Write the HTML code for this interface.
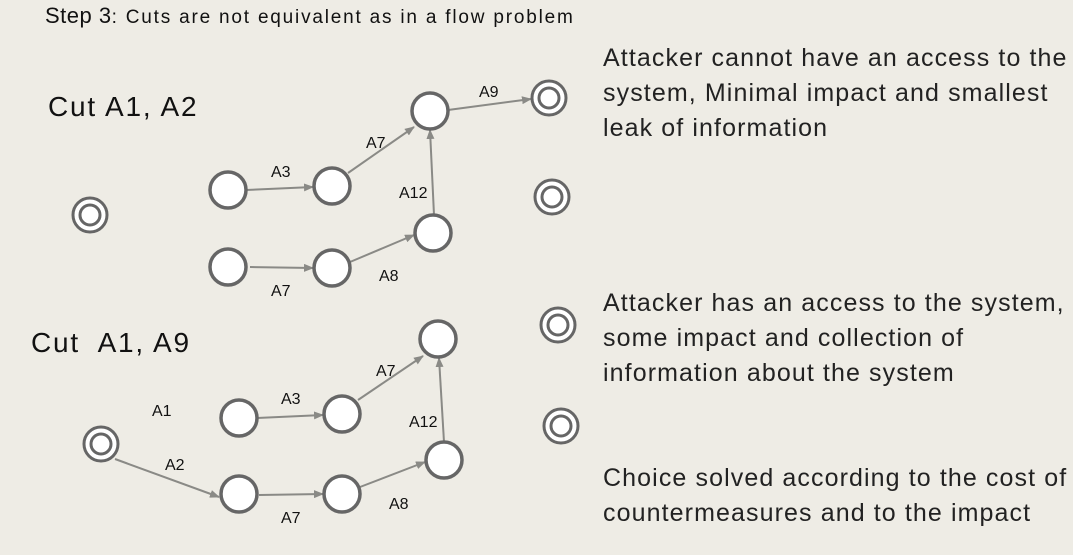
<!DOCTYPE html>
<html><head><meta charset="utf-8"><style>
html,body{margin:0;padding:0}
body{width:1073px;height:555px;background:#eeece5;position:relative;overflow:hidden;font-family:"Liberation Sans",sans-serif;color:#111}
.t{position:absolute;white-space:nowrap}
.r{position:absolute;left:603px;font-size:25px;letter-spacing:1.1px;line-height:35px;white-space:nowrap;color:#222}
</style></head><body>
<div class="t" style="left:45px;top:3px;font-size:22px;letter-spacing:0.5px"><span>Step 3</span><span style="font-size:19px;letter-spacing:1.8px">: Cuts are not equivalent as in a flow problem</span></div>
<div class="t" style="left:48px;top:91px;font-size:28px;letter-spacing:1.8px">Cut A1, A2</div>
<div class="t" style="left:31px;top:327px;font-size:28px;letter-spacing:1.8px">Cut&nbsp; A1, A9</div>
<div class="r" style="top:41px">Attacker cannot have an access to the<br>system, Minimal impact and smallest<br>leak of information</div>
<div class="r" style="top:286px">Attacker has an access to the system,<br>some impact and collection of<br>information about the system</div>
<div class="r" style="top:461px">Choice solved according to the cost of<br>countermeasures and to the impact</div>
<svg width="1073" height="555" style="position:absolute;left:0;top:0">
<defs><marker id="a" markerWidth="10" markerHeight="8" refX="9" refY="4" orient="auto" markerUnits="userSpaceOnUse"><path d="M0,0L10,4L0,8z" fill="#8a8a86"/></marker></defs>
<g stroke="#8a8a86" stroke-width="2" marker-end="url(#a)">
<line x1="246" y1="190" x2="313" y2="187"/>
<line x1="348" y1="173" x2="414" y2="127"/>
<line x1="448" y1="110" x2="531" y2="99"/>
<line x1="434" y1="215" x2="430" y2="130"/>
<line x1="250" y1="267" x2="313" y2="268"/>
<line x1="350" y1="262" x2="414" y2="235"/>
<line x1="257" y1="418" x2="323" y2="415"/>
<line x1="358" y1="400" x2="423" y2="356"/>
<line x1="444" y1="442" x2="439" y2="358"/>
<line x1="115" y1="459" x2="219" y2="497"/>
<line x1="259" y1="495" x2="323" y2="494"/>
<line x1="360" y1="487" x2="425" y2="462"/>
</g>
<g fill="#fff" stroke="#666" stroke-width="3.5">
<circle cx="228" cy="190" r="18"/><circle cx="332" cy="186" r="18"/><circle cx="430" cy="111" r="18"/><circle cx="433" cy="233" r="18"/><circle cx="228" cy="267" r="18"/><circle cx="332" cy="268" r="18"/>
<circle cx="239" cy="418" r="18"/><circle cx="342" cy="414" r="18"/><circle cx="438" cy="339" r="18"/><circle cx="444" cy="460" r="18"/><circle cx="239" cy="494" r="18"/><circle cx="342" cy="494" r="18"/>
</g>
<g fill="#fff" stroke="#666" stroke-width="3">
<circle cx="549" cy="98" r="17"/><circle cx="549" cy="98" r="10"/>
<circle cx="552" cy="197" r="17"/><circle cx="552" cy="197" r="10"/>
<circle cx="90" cy="215" r="17"/><circle cx="90" cy="215" r="10"/>
<circle cx="101" cy="444" r="17"/><circle cx="101" cy="444" r="10"/>
<circle cx="558" cy="325" r="17"/><circle cx="558" cy="325" r="10"/>
<circle cx="561" cy="426" r="17"/><circle cx="561" cy="426" r="10"/>
</g>
<g font-family="Liberation Sans, sans-serif" font-size="16" fill="#111">
<text x="271" y="177">A3</text><text x="366" y="148">A7</text><text x="479" y="97">A9</text><text x="399" y="198">A12</text>
<text x="271" y="296">A7</text><text x="379" y="281">A8</text>
<text x="152" y="416">A1</text><text x="281" y="404">A3</text><text x="376" y="376">A7</text><text x="409" y="427">A12</text>
<text x="165" y="470">A2</text><text x="281" y="523">A7</text><text x="389" y="509">A8</text>
</g>
</svg>
</body></html>
